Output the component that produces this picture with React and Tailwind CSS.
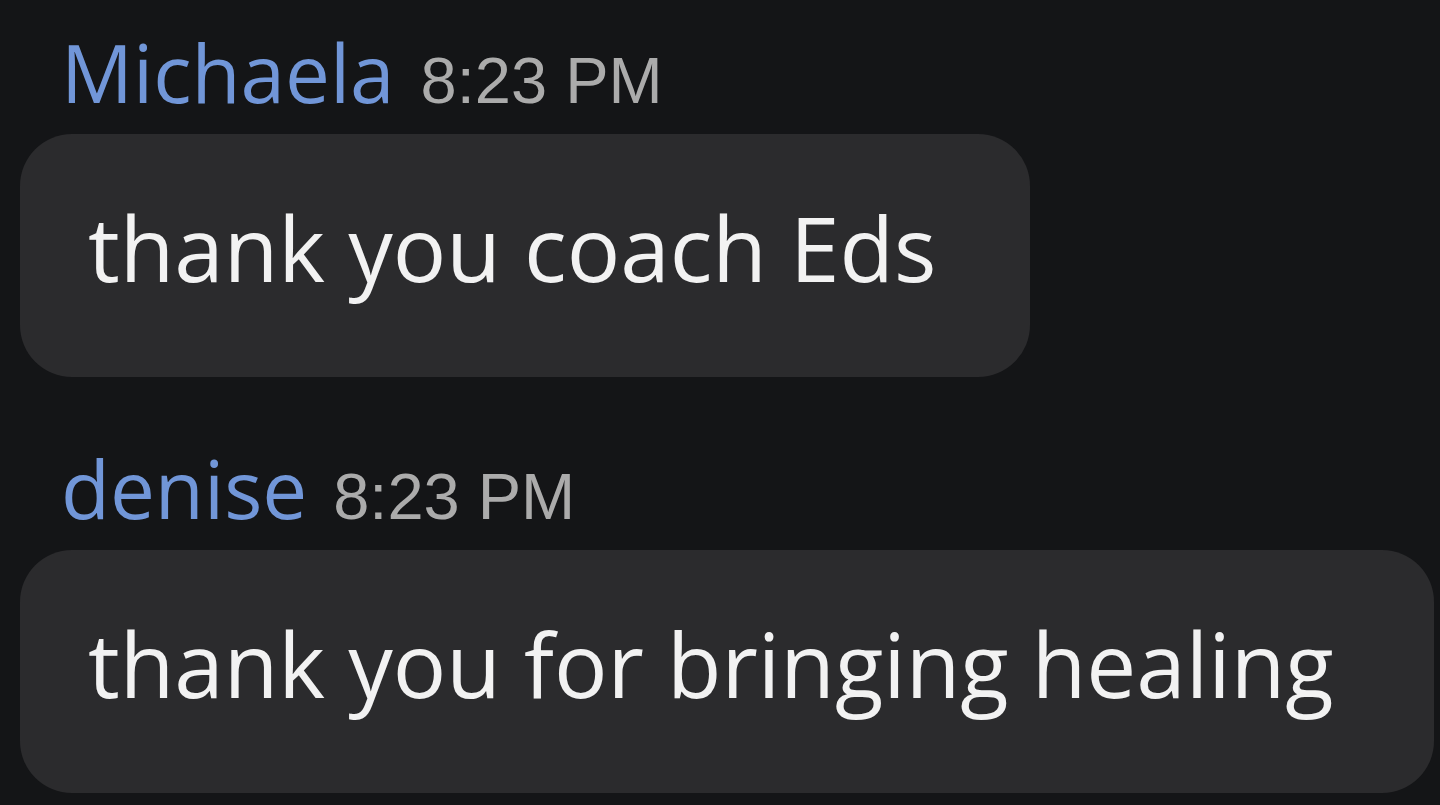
export default function App() {
  const messages = [
    { name: 'Michaela', time: '8:23 PM', text: 'thank you coach Eds', width: 'w-[1010px]' },
    { name: 'denise', time: '8:23 PM', text: 'thank you for bringing healing', width: 'w-[1414px]' },
  ]

  return (
    <div className="w-[1440px] h-[805px] overflow-hidden bg-[#141517] pt-[32px] pl-[20px]">
      {messages.map((m) => (
        <div key={m.name} className="mb-[71px]">
          {/* Header */}
          <div className="flex items-baseline pl-[41px] mb-[21px] leading-none">
            <span className="text-[80px] text-[#7196d8] font-['Open_Sans',sans-serif]">{m.name}</span>
            <span className="ml-[26px] text-[65px] text-[#ababab] font-['Liberation_Sans',Arial,sans-serif]">{m.time}</span>
          </div>

          {/* Bubble */}
          <div className={`${m.width} h-[243px] rounded-[52px] bg-[#2b2b2d] flex items-center pl-[68px]`}>
            <span className="text-[89px] leading-none text-[#f2f2f2] font-['Open_Sans',sans-serif] pb-[16px]">{m.text}</span>
          </div>
        </div>
      ))}
    </div>
  )
}
